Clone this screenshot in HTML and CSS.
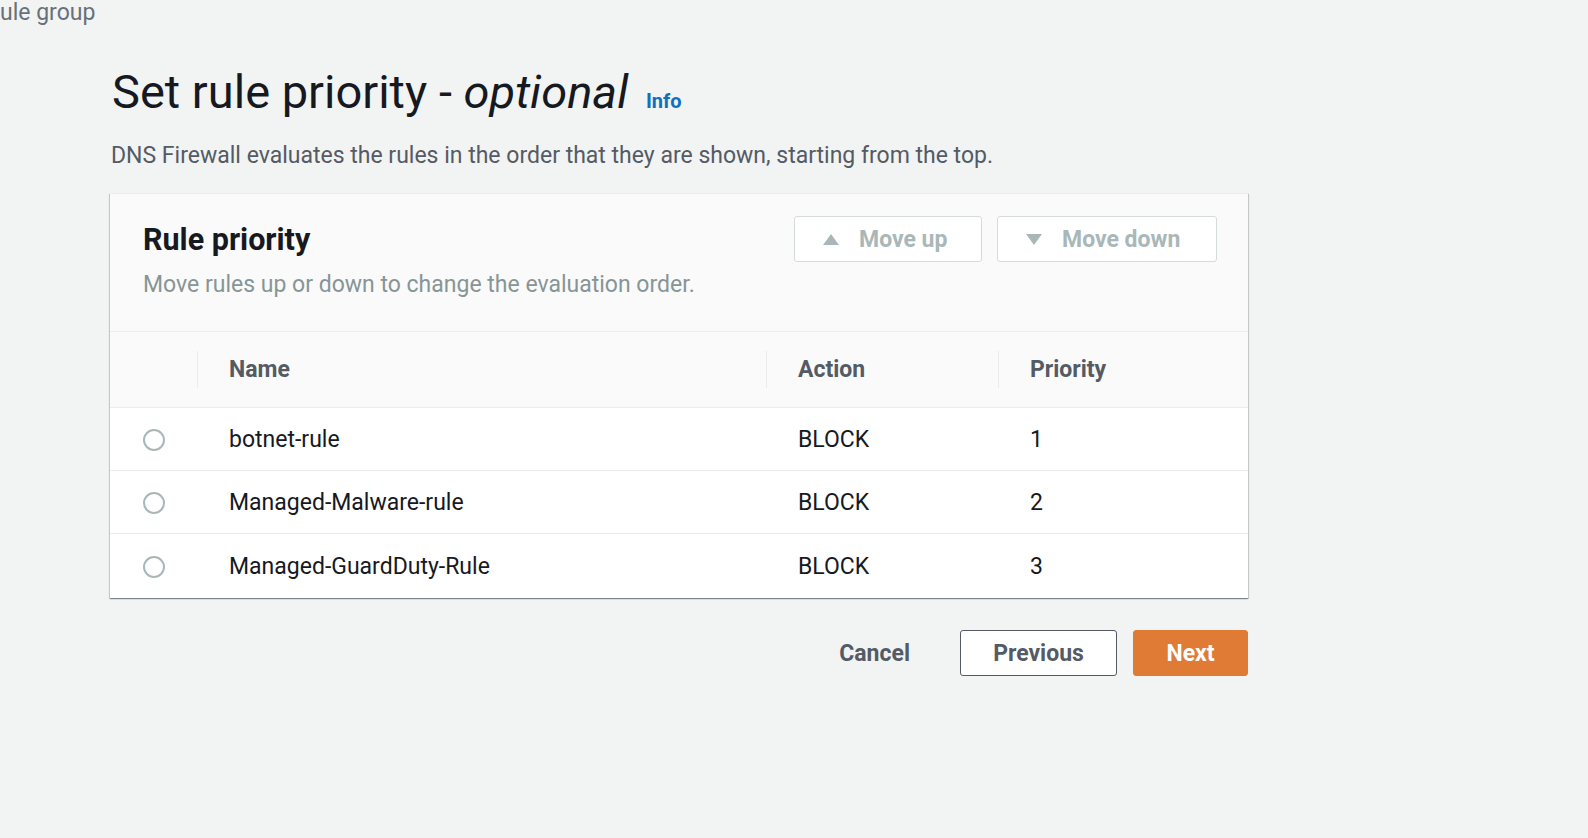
FILE: index.html
```html
<!DOCTYPE html>
<html lang="en">
<head>
<meta charset="utf-8">
<title>Set rule priority</title>
<link rel="stylesheet" href="styles.css">
</head>
<body>
<div class="crumb">ule group</div>
<main class="main">
  <h1 class="title">Set rule priority - <em>optional</em> <a class="info" href="#">Info</a></h1>
  <p class="desc">DNS Firewall evaluates the rules in the order that they are shown, starting from the top.</p>
  <section class="panel">
    <div class="panel-head">
      <div class="panel-titles">
        <h2 class="panel-title">Rule priority</h2>
        <p class="panel-sub">Move rules up or down to change the evaluation order.</p>
      </div>
      <div class="panel-actions">
        <button class="move-btn move-up" type="button"><svg class="tri" width="16" height="11" viewBox="0 0 16 11"><polygon points="8,0 16,11 0,11" fill="#aab7b8"/></svg><span>Move up</span></button>
        <button class="move-btn move-down" type="button"><svg class="tri" width="16" height="11" viewBox="0 0 16 11"><polygon points="0,0 16,0 8,11" fill="#aab7b8"/></svg><span>Move down</span></button>
      </div>
    </div>
    <div class="table">
      <div class="thead">
        <div class="th th-sel"></div>
        <div class="th"><span class="th-in">Name</span></div>
        <div class="th"><span class="th-in">Action</span></div>
        <div class="th"><span class="th-in">Priority</span></div>
      </div>
      <div class="tr">
        <div class="td td-sel"><span class="radio"></span></div>
        <div class="td">botnet-rule</div>
        <div class="td">BLOCK</div>
        <div class="td">1</div>
      </div>
      <div class="tr">
        <div class="td td-sel"><span class="radio"></span></div>
        <div class="td">Managed-Malware-rule</div>
        <div class="td">BLOCK</div>
        <div class="td">2</div>
      </div>
      <div class="tr last">
        <div class="td td-sel"><span class="radio"></span></div>
        <div class="td">Managed-GuardDuty-Rule</div>
        <div class="td">BLOCK</div>
        <div class="td">3</div>
      </div>
    </div>
  </section>
  <div class="footer">
    <button class="btn-link" type="button">Cancel</button>
    <button class="btn-normal" type="button">Previous</button>
    <button class="btn-primary" type="button">Next</button>
  </div>
</main>
</body>
</html>
```
FILE: styles.css
```css
* { box-sizing: border-box; }
html, body { margin: 0; padding: 0; }
body {
  background: #f2f3f3;
  font-family: Roboto, "Noto Sans", Arial, sans-serif;
  color: #16191f;
  width: 1588px;
  height: 838px;
  overflow: hidden;
}
.crumb {
  font-size: 23px;
  line-height: 26px;
  color: #687078;
  height: 24px;
}
.main {
  width: 1138px;
  margin-left: 110px;
}
.title {
  margin: 0;
  padding-left: 2px;
  margin-top: 40px;
  font-size: 47px;
  line-height: 56px;
  font-weight: 400;
  color: #16191f;
}
.title em { font-style: italic; }
.info {
  font-size: 20px;
  font-weight: 700;
  color: #0f6fc0;
  text-decoration: none;
  margin-left: 6px;
}
.desc {
  margin: 12px 0 0 1px;
  font-size: 23px;
  line-height: 30px;
  color: #545b64;
}
.panel {
  margin-top: 22px;
  background: #fff;
  box-shadow: 0 1px 1px 0 rgba(0,28,36,.3), 1px 1px 1px 0 rgba(0,28,36,.15), -1px 1px 1px 0 rgba(0,28,36,.15);
  border-top: 1px solid #eaeded;
}
.panel-head {
  background: #fafafa;
  display: flex;
  justify-content: space-between;
  align-items: flex-start;
  padding: 0 31px 0 33px;
  height: 138px;
  border-bottom: 1px solid #eaeded;
}
.panel-titles { padding-top: 27px; }
.panel-title {
  margin: 0;
  font-size: 30.5px;
  line-height: 38px;
  font-weight: 700;
  color: #16191f;
}
.panel-sub {
  margin: 11px 0 0 0;
  font-size: 23px;
  line-height: 30px;
  color: #879596;
}
.panel-actions {
  display: flex;
  gap: 15px;
  padding-top: 22px;
}
.move-btn {
  height: 46px;
  background: #fff;
  border: 1px solid #d5dbdb;
  border-radius: 3px;
  font-family: inherit;
  font-size: 23px;
  font-weight: 700;
  color: #aab7b8;
  display: flex;
  align-items: center;
  gap: 20px;
  padding: 0 28px;
}
.move-up { width: 188px; }
.move-down { width: 220px; }
.tri { display: block; }
.thead, .tr {
  display: grid;
  grid-template-columns: 87px 569px 232px 1fr;
  align-items: center;
}
.thead {
  height: 76px;
  background: #fafafa;
  border-bottom: 1px solid #eaeded;
}
.th-in {
  display: flex;
  align-items: center;
  height: 37px;
  border-left: 1px solid #eaeded;
  padding-left: 31px;
  font-size: 23px;
  font-weight: 700;
  color: #545b64;
}
.tr {
  height: 63px;
  border-bottom: 1px solid #eaeded;
  font-size: 23px;
  color: #16191f;
  padding-top: 1px;
}
.tr.last { border-bottom: 0; height: 64px; }
.td { padding-left: 32px; }
.td-sel {
  padding-left: 0;
  display: flex;
  justify-content: center;
}
.radio {
  width: 22px;
  height: 22px;
  border: 2px solid #aab7b8;
  border-radius: 50%;
  background: #fff;
  display: block;
}
.footer {
  display: flex;
  justify-content: flex-end;
  gap: 16px;
  margin-top: 32px;
}
.footer button {
  height: 46px;
  font-family: inherit;
  font-size: 23px;
  font-weight: 700;
  border-radius: 3px;
}
.btn-link {
  background: transparent;
  border: 0;
  color: #545b64;
  padding: 0 34px;
}
.btn-normal {
  width: 157px;
  background: #fff;
  border: 1px solid #545b64;
  color: #545b64;
}
.btn-primary {
  width: 115px;
  background: #e07b36;
  border: 1px solid #e07b36;
  color: #fff;
}
```
